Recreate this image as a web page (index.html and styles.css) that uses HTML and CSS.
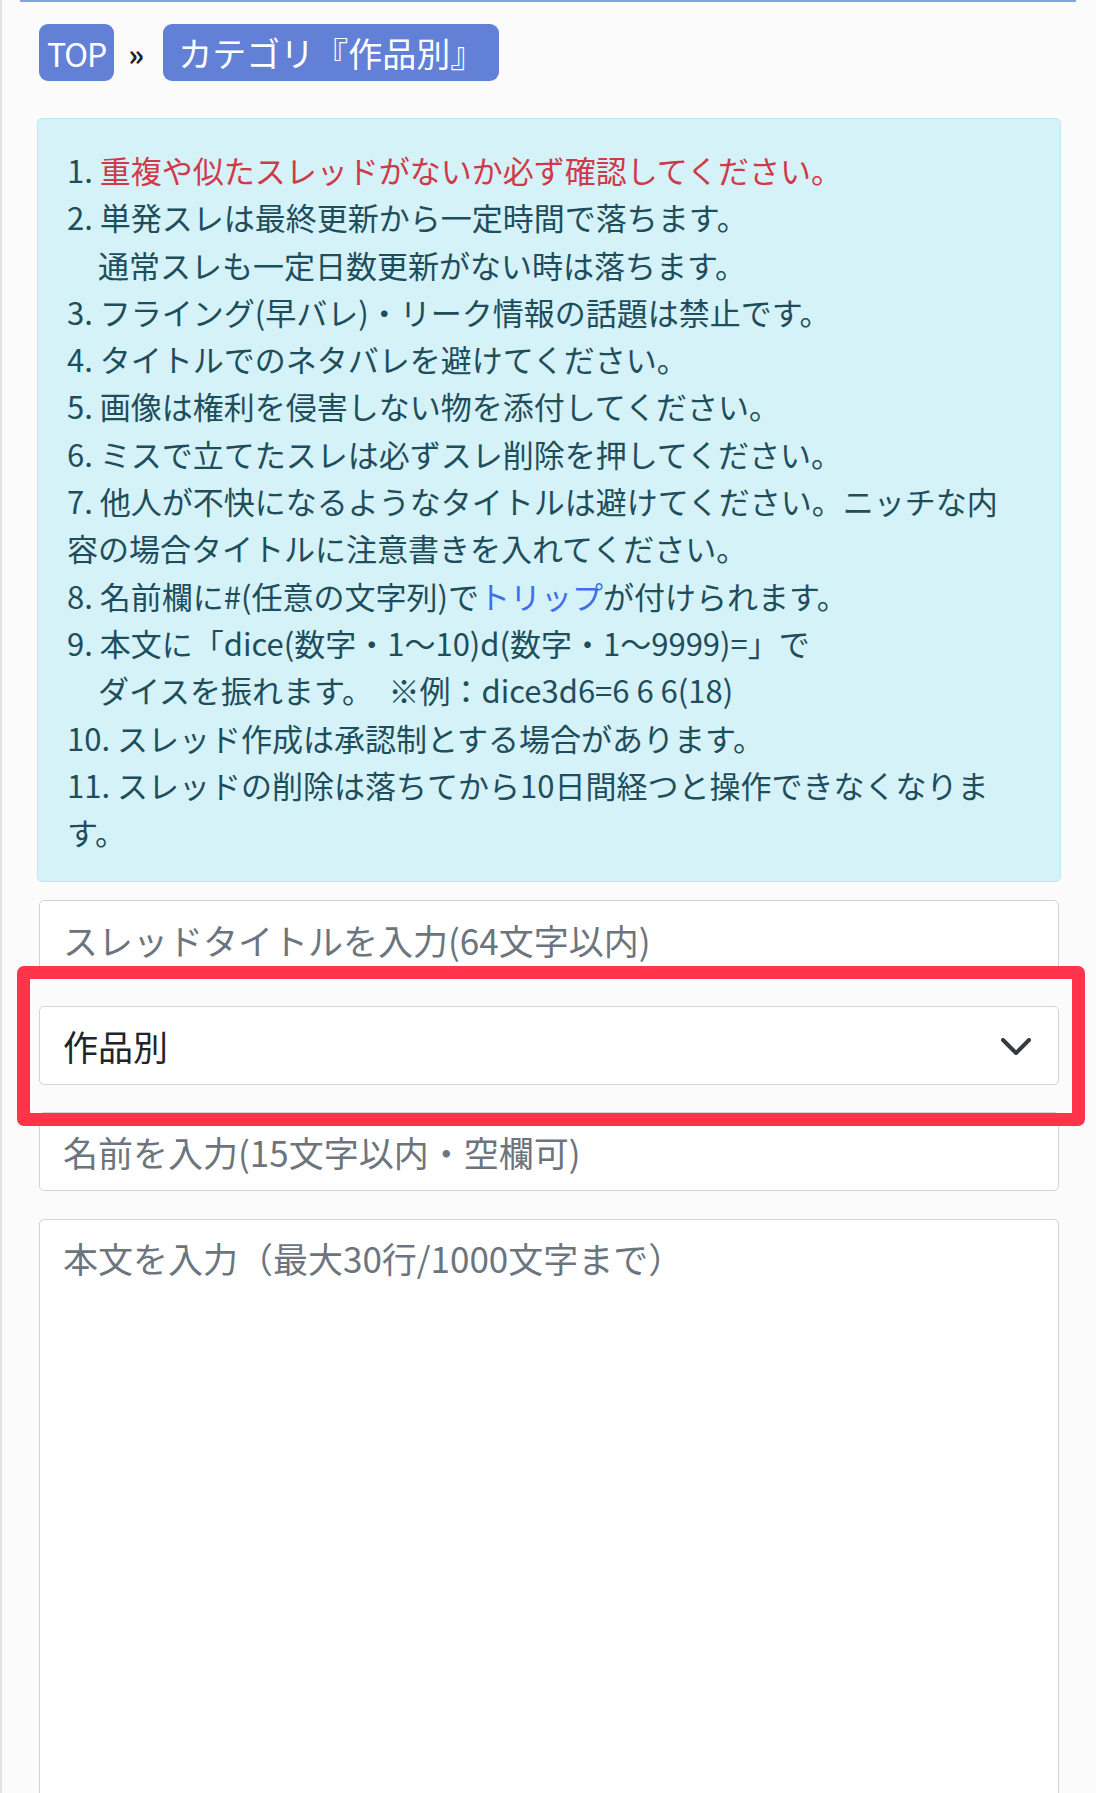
FILE: index.html
```html
<!DOCTYPE html>
<html lang="ja">
<head>
  <meta charset="UTF-8" />
  <meta name="viewport" content="width=device-width, initial-scale=1.0" />
  <title>スレッド作成</title>
  <link rel="stylesheet" href="styles.css">
</head>
<body>
<div class="page">

  <div class="top-line"></div>

  <div class="breadcrumb">
    <a class="crumb crumb-top" href="#">TOP</a>
    <span class="crumb-sep">»</span>
    <a class="crumb" href="#">カテゴリ『作品別』</a>
  </div>

  <div class="rules">
    <div class="rule">1. <span class="warn">重複や似たスレッドがないか必ず確認してください。</span></div>
    <div class="rule">2. 単発スレは最終更新から一定時間で落ちます。<br>　通常スレも一定日数更新がない時は落ちます。</div>
    <div class="rule">3. フライング(早バレ)・リーク情報の話題は禁止です。</div>
    <div class="rule">4. タイトルでのネタバレを避けてください。</div>
    <div class="rule">5. 画像は権利を侵害しない物を添付してください。</div>
    <div class="rule">6. ミスで立てたスレは必ずスレ削除を押してください。</div>
    <div class="rule">7. 他人が不快になるようなタイトルは避けてください。ニッチな内容の場合タイトルに注意書きを入れてください。</div>
    <div class="rule">8. 名前欄に#(任意の文字列)で<a class="link" href="#">トリップ</a>が付けられます。</div>
    <div class="rule">9. 本文に「dice(数字・1〜10)d(数字・1〜9999)=」で<br>　ダイスを振れます。　※例：dice3d6=6 6 6(18)</div>
    <div class="rule">10. スレッド作成は承認制とする場合があります。</div>
    <div class="rule">11. スレッドの削除は落ちてから10日間経つと操作できなくなります。</div>
  </div>

  <form class="thread-form">
    <input class="field" type="text" placeholder="スレッドタイトルを入力(64文字以内)">
    <div class="select-wrap">
      <select class="field field-select">
        <option>作品別</option>
      </select>
      <svg class="chevron" width="30" height="18" viewBox="0 0 30 18">
        <polyline points="2,2 15,15 28,2" fill="none" stroke="#343a40" stroke-width="4" stroke-linecap="round" stroke-linejoin="round"/>
      </svg>
      <div class="highlight"></div>
    </div>
    <input class="field" type="text" placeholder="名前を入力(15文字以内・空欄可)">
    <textarea class="field field-body" placeholder="本文を入力（最大30行/1000文字まで）"></textarea>
  </form>

</div>
</body>
</html>
```

FILE: styles.css
```css
body {
  margin: 0;
  background: #fbfbfb;
  font-family: "Noto Sans CJK JP", "Noto Sans", sans-serif;
  color: #212529;
}
.page {
  border-left: 2px solid #e2e2e2;
  min-height: 1793px;
}
.top-line {
  margin: 0 20px 0 18px;
  border-top: 2px solid #85a2e8;
}
.breadcrumb {
  display: flex;
  align-items: center;
  padding: 22px 0 0 37px;
}
.crumb {
  display: flex;
  align-items: center;
  height: 57px;
  padding: 0 15px;
  background: #6180d6;
  color: #fff;
  border-radius: 9px;
  font-size: 34px;
  text-decoration: none;
}
.crumb-top {
  padding: 0 8px;
  font-size: 32px;
  letter-spacing: -1px;
}
.crumb-sep {
  margin: 0 19px 0 14px;
  font-size: 30px;
  font-weight: bold;
  color: #222;
}
.rules {
  margin: 37px 35px 0 35px;
  padding: 27px 52px 26px 29px;
  background: #d5f2f9;
  border: 1px solid #bde9f6;
  border-radius: 5px;
  color: #1e4e5c;
  font-size: 31px;
  line-height: 47.3px;
}
.warn {
  color: #cf3a48;
}
.link {
  color: #3f6ef0;
  text-decoration: none;
}
.thread-form {
  display: flex;
  flex-direction: column;
  gap: 27px;
  margin: 18px 37px 0 37px;
}
.field {
  box-sizing: border-box;
  width: 100%;
  height: 79px;
  margin: 0;
  padding: 0 23px;
  background: #fff;
  border: 1px solid #ced4da;
  border-radius: 5px;
  font-family: inherit;
  font-size: 35px;
  color: #212529;
  outline: none;
}
.field::placeholder {
  color: #6c757d;
}
.select-wrap {
  position: relative;
}
.field-select {
  appearance: none;
  -webkit-appearance: none;
}
.chevron {
  position: absolute;
  right: 28px;
  top: 32px;
  pointer-events: none;
}
.highlight {
  position: absolute;
  left: -22px;
  top: -40px;
  right: -26px;
  bottom: -41px;
  border: 13px solid #ff334a;
  border-radius: 7px;
  pointer-events: none;
}
.field-body {
  height: 590px;
  margin-top: 1px;
  padding-top: 12px;
  line-height: 52px;
  resize: vertical;
}
```
